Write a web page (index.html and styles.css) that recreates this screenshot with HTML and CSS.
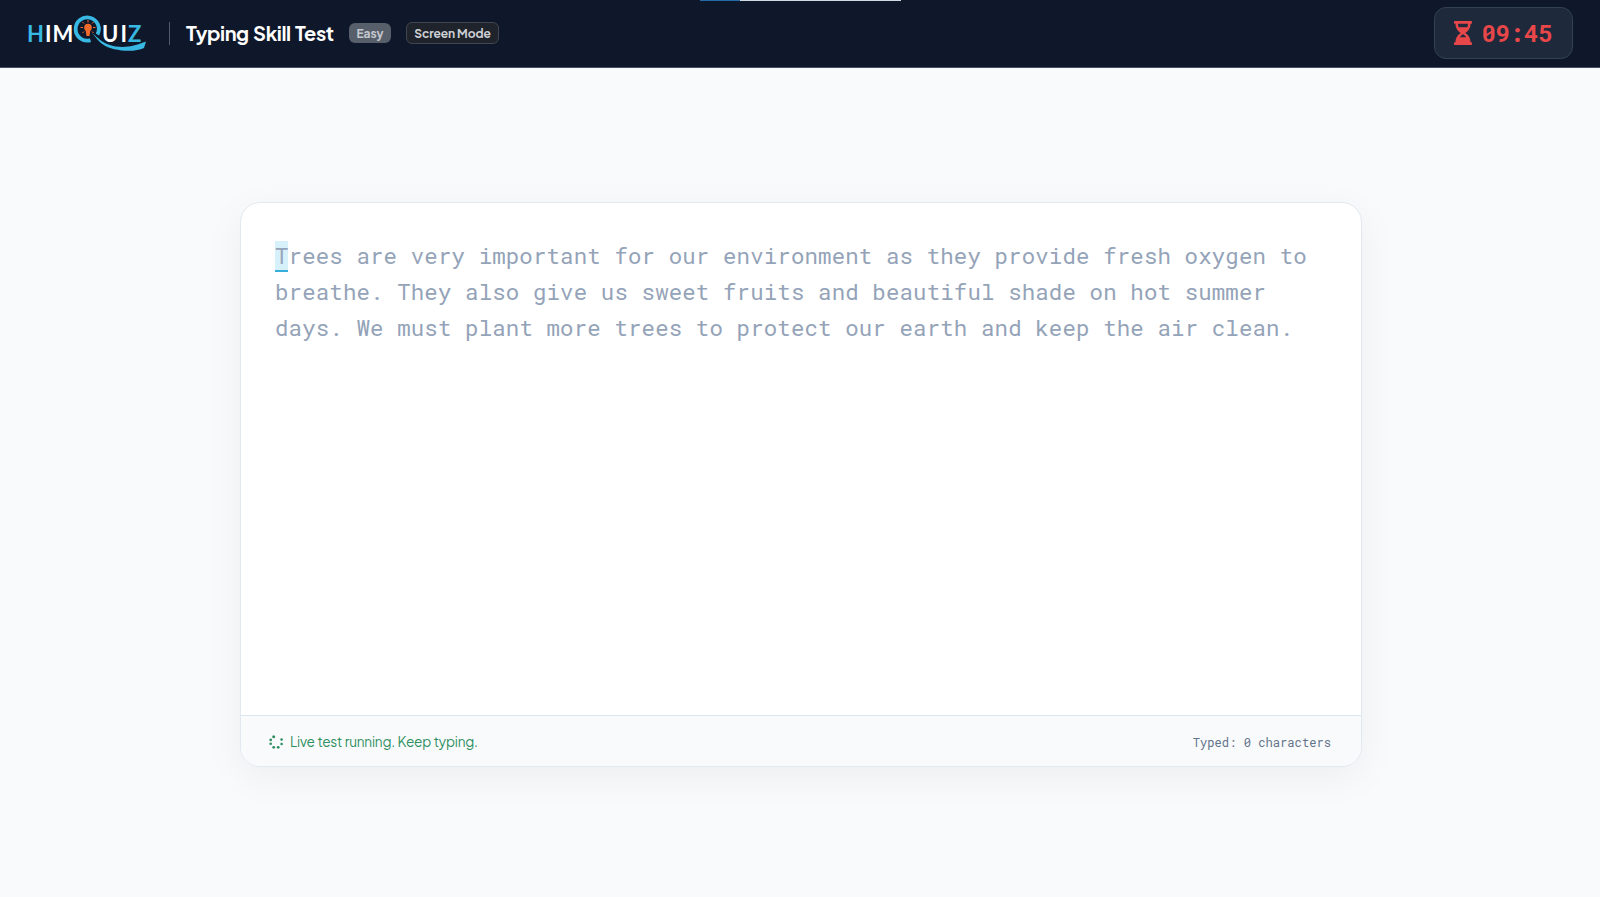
FILE: index.html
```html
<!DOCTYPE html>
<html lang="en">
<head>
<meta charset="utf-8">
<title>Typing Skill Test</title>
<link rel="stylesheet" href="styles.css">
</head>
<body>
<div class="loader"><div class="loader-fill"></div></div>
<header class="topbar">
  <div class="brand">
    <svg class="logo" width="120" height="38" viewBox="0 0 120 38">
      <g class="logo-text">
        <text x="-1" y="28" fill="#37b9e3">H</text>
        <text x="17" y="28" fill="#fff">I</text>
        <text x="24.500" y="28" fill="#fff">M</text>
        <text x="74" y="28" fill="#fff">U</text>
        <text x="92.500" y="28" fill="#fff">I</text>
        <text x="100" y="28" fill="#37b9e3">Z</text>
      </g>
      <path d="M62.500 26.200A11.600 11.600 0 1 1 69.500 20.500" fill="none" stroke="#37b9e3" stroke-width="3.800"/>
      <path d="M64 19.500C68 21 73 30 88 32.500C100 34 109 31 118 27.500L116 34C106 39 84 37 75 30.500C69 26 68 23 64 19.500Z" fill="#37b9e3"/>
      <circle cx="60" cy="13.500" r="3.800" fill="#f26a2a"/>
      <path d="M57.500 15h5l-1 7h-3z" fill="#f26a2a"/>
      <path d="M60 6v2.500M54.500 8l1.500 1.500M65.500 8l-1.500 1.500M52.500 13.500h2.500M65 13.500h2.500M54.500 19l1.500-1.500M65.500 19l-1.500-1.500" stroke="#f26a2a" stroke-width="1"/>
    </svg>
    <span class="divider"></span>
    <h1 class="title">Typing Skill Test</h1>
    <span class="badge badge-level">Easy</span>
    <span class="badge badge-mode">Screen Mode</span>
  </div>
  <div class="timer">
    <svg width="18" height="24" viewBox="0 0 18 24" fill="#e8474a"><path fill-rule="evenodd" d="M.7 0h16.600q.7 0 .7.700v1.300q0 .7-.7.700H16.500C16.500 7.500 14 10 11.300 12C14 14 16.500 16.500 16.500 21.300h.8q.7 0 .7.700v1.300q0 .7-.7.700H.7q-.7 0-.7-.7V22q0-.7.700-.7h.8C1.500 16.500 4 14 6.700 12C4 10 1.500 7.500 1.500 2.700H.7Q0 2.700 0 2V.7Q0 0 .7 0zM4 2.700Q4 4.700 4.700 6.200h8.600Q14 4.700 14 2.700zM9 13.300Q7 14.500 5.900 16.200h6.200Q11 14.500 9 13.300z"/></svg>
    <span class="timer-value">09:45</span>
  </div>
</header>
<main class="stage">
  <section class="card">
    <div class="passage"><span class="current">T</span>rees are very important for our environment as they provide fresh oxygen to breathe. They also give us sweet fruits and beautiful shade on hot summer days. We must plant more trees to protect our earth and keep the air clean.</div>
    <footer class="status">
      <div class="live">
        <svg width="14" height="14" viewBox="0 0 14 14" fill="#2f8f61"><circle cx="4.700" cy="1.700" r="1.500"/><circle cx="1.700" cy="4.900" r="1.300"/><circle cx="1.700" cy="8.800" r="1.300"/><circle cx="4.700" cy="12.300" r="1.400"/><circle cx="9.200" cy="12.300" r="1.400"/><circle cx="12.600" cy="9" r="1.300"/><circle cx="12.600" cy="4.500" r="1.300"/></svg>
        <span>Live test running. Keep typing.</span>
      </div>
      <span class="count">Typed: 0 characters</span>
    </footer>
  </section>
</main>
</body>
</html>
```
FILE: styles.css
```css
* { box-sizing: border-box; }
body {
  margin: 0;
  height: 897px;
  display: flex;
  flex-direction: column;
  overflow: hidden;
  background: #f8fafc;
  font-family: "Plus Jakarta Sans", Inter, sans-serif;
}
.loader {
  position: absolute;
  top: 0;
  left: 700px;
  width: 201px;
  height: 1px;
  background: #cfdbe3;
}
.loader-fill { width: 40px; height: 1px; background: #2469a8; }
.topbar {
  flex: none;
  height: 68px;
  padding: 0 27px 1px 28px;
  display: flex;
  align-items: center;
  justify-content: space-between;
  background: #0f172a;
  border-bottom: 1px solid #46505f;
}
.brand { display: flex; align-items: center; }
.logo { overflow: visible; }
.logo-text { font: 700 22px Lato, sans-serif; }
.divider { width: 1px; height: 23px; margin: 0 16px 0 21px; background: #535b6a; }
.title { margin: 0; width: 148px; font-size: 20px; line-height: 24px; font-weight: 700; letter-spacing: -0.4px; word-spacing: 1.200px; color: #fff; white-space: nowrap; }
.badge { font-size: 12px; font-weight: 700; white-space: nowrap; display: flex; align-items: center; justify-content: center; }
.badge-level { width: 42px; height: 20px; margin-left: 15px; border-radius: 6px; background: #575f6b; color: #c5c9cf; }
.badge-mode { width: 93px; height: 22px; margin-left: 15px; border: 1px solid #41464f; border-radius: 6px; background: #1f232b; color: #cdd0d5; letter-spacing: -0.1px; }
.timer {
  width: 139px;
  height: 52px;
  display: flex;
  align-items: center;
  justify-content: center;
  gap: 9px;
  border: 1px solid #334155;
  border-radius: 12px;
  background: #1e293b;
}
.timer-value { font: 700 24px "Roboto Mono", "Liberation Mono", monospace; letter-spacing: -0.2px; color: #e8474a; }
.stage { flex: 1; display: flex; align-items: center; justify-content: center; padding: 4px 0 0 2px; }
.card {
  width: 1122px;
  height: 565px;
  display: flex;
  flex-direction: column;
  overflow: hidden;
  border: 1px solid #e2e8f0;
  border-radius: 20px;
  background: #fff;
  box-shadow: 0 10px 40px rgba(0, 0, 0, 0.05);
}
.passage {
  flex: 1;
  padding: 35px 34px;
  font: 400 22.400px/35.840px "Roboto Mono", "Liberation Mono", monospace;
  letter-spacing: 0.14px;
  color: #94a3b8;
}
.current { background: #d7f1fa; border-bottom: 2px solid #38aedb; letter-spacing: 0; margin-right: 0.14px; }
.status {
  height: 51px;
  padding: 1px 30px 0 28px;
  display: flex;
  align-items: center;
  justify-content: space-between;
  border-top: 1px solid #dde5ee;
  background: #f8fafc;
}
.live { display: flex; align-items: center; gap: 7px; font-size: 13.600px; letter-spacing: -0.2px; word-spacing: 0.5px; color: #2f8f61; }
.count { font: 12.130px "Roboto Mono", "Liberation Mono", monospace; color: #64748b; }
```
